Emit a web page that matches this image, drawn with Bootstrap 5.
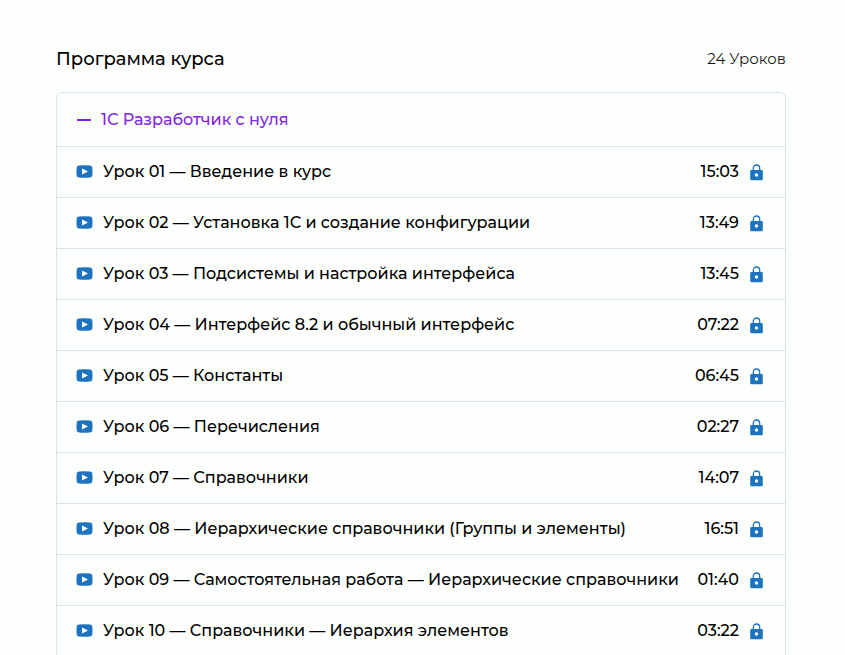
<!DOCTYPE html>
<html lang="ru">
<head>
<meta charset="utf-8">
<meta name="viewport" content="width=device-width, initial-scale=1">
<title>Программа курса</title>
<link href="https://cdn.jsdelivr.net/npm/bootstrap@5.3.0/dist/css/bootstrap.min.css" rel="stylesheet">
<style>
  body { background: #fdfffc; color: #000; font-family: Montserrat, Inter, "Noto Sans", sans-serif; font-size: 16px; line-height: 24px; font-weight: 500; }
  .program { padding: 45px 59px 0 56px; }
  .program-head { margin-bottom: 19px; }
  .program-title { font-size: 18px; line-height: 28px; font-weight: 500; }
  .program-count { font-size: 15px; font-weight: 400; color: #161623; }
  .program-box { border: 1px solid #d9e3e4; border-radius: 6px; }
  .section-toggle { height: 53px; padding: 0 20px; gap: 10px; color: #8224e3; font-weight: 500; }
  .lesson { height: 51px; padding: 0 22px 0 19px; border-top: 1px solid #d9e3e4; }
  .lesson-name { margin-left: 10px; }
  .lesson-time { margin-right: 11px; }
  .lesson svg { color: #1e73be; flex: none; }
</style>
<script src="https://cdn.jsdelivr.net/npm/bootstrap@5.3.0/dist/js/bootstrap.bundle.min.js" defer></script>
</head>
<body>
<svg class="d-none" aria-hidden="true">
  <symbol id="play" viewBox="0 0 17 14"><path fill="currentColor" fill-rule="evenodd" d="M3 .5Q8.500 0 14 .5Q16 .7 16.300 2.500Q16.800 6.500 16.300 10.500Q16 12.300 14 12.500Q8.500 13 3 12.500Q1 12.300.7 10.500Q.2 6.500.7 2.500Q1 .7 3 .5ZM6 3.500V9.500L12 6.500Z"/></symbol>
  <symbol id="lock" viewBox="0 -1 13 18"><path fill="none" stroke="currentColor" stroke-width="1.300" d="M3.300 7V4.200C3.300 2.200 4.600 1 6.500 1S9.700 2.200 9.700 4.200V7"/><path fill="currentColor" fill-rule="evenodd" d="M1.500 6H11.500Q12.800 6 12.800 7.300V15Q12.800 16.300 11.500 16.300H1.500Q.2 16.300.2 15V7.300Q.2 6 1.500 6ZM6.500 9.300A1.700 1.700 0 1 0 6.500 12.700A1.700 1.700 0 1 0 6.500 9.300Z"/></symbol>
</svg>
<main class="program">
  <header class="program-head d-flex justify-content-between align-items-center">
    <h1 class="program-title m-0">Программа курса</h1>
    <span class="program-count">24 Уроков</span>
  </header>
  <section class="program-box border-bottom-0 rounded-bottom-0">
    <button class="section-toggle btn w-100 border-0 d-flex align-items-center" type="button" data-bs-toggle="collapse" data-bs-target="#lessons" aria-expanded="true" aria-controls="lessons">
      <svg width="14" height="2" aria-hidden="true"><path fill="currentColor" d="M0 0H14V2H0Z"/></svg>
      <span>1С Разработчик с нуля</span>
    </button>
    <ul id="lessons" class="collapse show list-unstyled m-0">
      <li class="lesson d-flex align-items-center"><svg width="17" height="14" aria-hidden="true"><use href="#play"/></svg><span class="lesson-name flex-grow-1">Урок 01 — Введение в курс</span><span class="lesson-time">15:03</span><svg width="13" height="18" aria-hidden="true"><use href="#lock"/></svg></li>
      <li class="lesson d-flex align-items-center"><svg width="17" height="14" aria-hidden="true"><use href="#play"/></svg><span class="lesson-name flex-grow-1">Урок 02 — Установка 1С и создание конфигурации</span><span class="lesson-time">13:49</span><svg width="13" height="18" aria-hidden="true"><use href="#lock"/></svg></li>
      <li class="lesson d-flex align-items-center"><svg width="17" height="14" aria-hidden="true"><use href="#play"/></svg><span class="lesson-name flex-grow-1">Урок 03 — Подсистемы и настройка интерфейса</span><span class="lesson-time">13:45</span><svg width="13" height="18" aria-hidden="true"><use href="#lock"/></svg></li>
      <li class="lesson d-flex align-items-center"><svg width="17" height="14" aria-hidden="true"><use href="#play"/></svg><span class="lesson-name flex-grow-1">Урок 04 — Интерфейс 8.2 и обычный интерфейс</span><span class="lesson-time">07:22</span><svg width="13" height="18" aria-hidden="true"><use href="#lock"/></svg></li>
      <li class="lesson d-flex align-items-center"><svg width="17" height="14" aria-hidden="true"><use href="#play"/></svg><span class="lesson-name flex-grow-1">Урок 05 — Константы</span><span class="lesson-time">06:45</span><svg width="13" height="18" aria-hidden="true"><use href="#lock"/></svg></li>
      <li class="lesson d-flex align-items-center"><svg width="17" height="14" aria-hidden="true"><use href="#play"/></svg><span class="lesson-name flex-grow-1">Урок 06 — Перечисления</span><span class="lesson-time">02:27</span><svg width="13" height="18" aria-hidden="true"><use href="#lock"/></svg></li>
      <li class="lesson d-flex align-items-center"><svg width="17" height="14" aria-hidden="true"><use href="#play"/></svg><span class="lesson-name flex-grow-1">Урок 07 — Справочники</span><span class="lesson-time">14:07</span><svg width="13" height="18" aria-hidden="true"><use href="#lock"/></svg></li>
      <li class="lesson d-flex align-items-center"><svg width="17" height="14" aria-hidden="true"><use href="#play"/></svg><span class="lesson-name flex-grow-1">Урок 08 — Иерархические справочники (Группы и элементы)</span><span class="lesson-time">16:51</span><svg width="13" height="18" aria-hidden="true"><use href="#lock"/></svg></li>
      <li class="lesson d-flex align-items-center"><svg width="17" height="14" aria-hidden="true"><use href="#play"/></svg><span class="lesson-name flex-grow-1">Урок 09 — Самостоятельная работа — Иерархические справочники</span><span class="lesson-time">01:40</span><svg width="13" height="18" aria-hidden="true"><use href="#lock"/></svg></li>
      <li class="lesson d-flex align-items-center"><svg width="17" height="14" aria-hidden="true"><use href="#play"/></svg><span class="lesson-name flex-grow-1">Урок 10 — Справочники — Иерархия элементов</span><span class="lesson-time">03:22</span><svg width="13" height="18" aria-hidden="true"><use href="#lock"/></svg></li>
    </ul>
  </section>
</main>
</body>
</html>
